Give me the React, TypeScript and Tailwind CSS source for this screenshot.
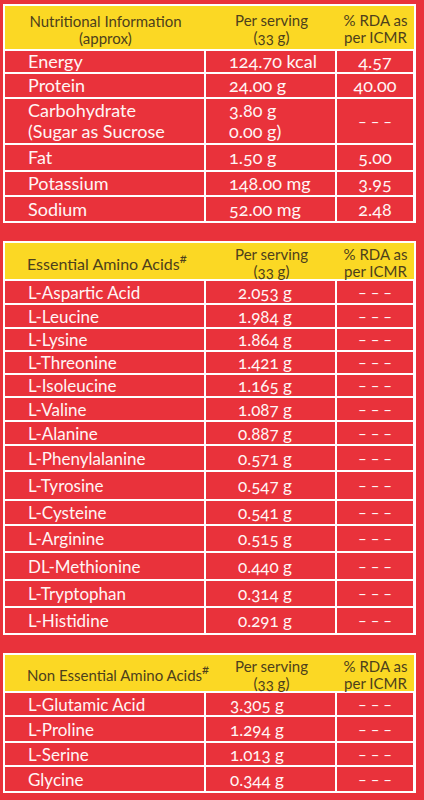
import React from "react";

type Row = { name: string[]; value: string[]; rda: string; h: string };

const DASH = "– – –";

const nutrition: Row[] = [
  { name: ["Energy"], value: ["124.70 kcal"], rda: "4.57", h: "h-[21px]" },
  { name: ["Protein"], value: ["24.00 g"], rda: "40.00", h: "h-[23px]" },
  {
    name: ["Carbohydrate", "(Sugar as Sucrose"],
    value: ["3.80 g", "0.00 g)"],
    rda: DASH,
    h: "h-[44px]",
  },
  { name: ["Fat"], value: ["1.50 g"], rda: "5.00", h: "h-[25px]" },
  { name: ["Potassium"], value: ["148.00 mg"], rda: "3.95", h: "h-[23px]" },
  { name: ["Sodium"], value: ["52.00 mg"], rda: "2.48", h: "h-[24px]" },
];

const essential: Row[] = [
  { name: ["L-Aspartic Acid"], value: ["2.053 g"], rda: DASH, h: "h-[22px]" },
  { name: ["L-Leucine"], value: ["1.984 g"], rda: DASH, h: "h-[22px]" },
  { name: ["L-Lysine"], value: ["1.864 g"], rda: DASH, h: "h-[21px]" },
  { name: ["L-Threonine"], value: ["1.421 g"], rda: DASH, h: "h-[21px]" },
  { name: ["L-Isoleucine"], value: ["1.165 g"], rda: DASH, h: "h-[21px]" },
  { name: ["L-Valine"], value: ["1.087 g"], rda: DASH, h: "h-[22px]" },
  { name: ["L-Alanine"], value: ["0.887 g"], rda: DASH, h: "h-[22px]" },
  { name: ["L-Phenylalanine"], value: ["0.571 g"], rda: DASH, h: "h-[24px]" },
  { name: ["L-Tyrosine"], value: ["0.547 g"], rda: DASH, h: "h-[27px]" },
  { name: ["L-Cysteine"], value: ["0.541 g"], rda: DASH, h: "h-[23px]" },
  { name: ["L-Arginine"], value: ["0.515 g"], rda: DASH, h: "h-[25px]" },
  { name: ["DL-Methionine"], value: ["0.440 g"], rda: DASH, h: "h-[26px]" },
  { name: ["L-Tryptophan"], value: ["0.314 g"], rda: DASH, h: "h-[25px]" },
  { name: ["L-Histidine"], value: ["0.291 g"], rda: DASH, h: "h-[25px]" },
];

const nonEssential: Row[] = [
  { name: ["L-Glutamic Acid"], value: ["3.305 g"], rda: DASH, h: "h-[22px]" },
  { name: ["L-Proline"], value: ["1.294 g"], rda: DASH, h: "h-[24px]" },
  { name: ["L-Serine"], value: ["1.013 g"], rda: DASH, h: "h-[22px]" },
  { name: ["Glycine"], value: ["0.344 g"], rda: DASH, h: "h-[24px]" },
];

function SideHeaders() {
  return (
    <>
      <div className="flex w-[131px] flex-col items-center pt-[3px] text-center">
        <span>Per serving</span>
        <span>(33 g)</span>
      </div>
      <div className="flex w-[77px] flex-col items-center pt-[3px] text-center">
        <span>% RDA as</span>
        <span>per ICMR</span>
      </div>
    </>
  );
}

function Table({
  head,
  rows,
  headH,
  big,
  valuePad,
}: {
  head: React.ReactNode;
  rows: Row[];
  headH: string;
  big?: boolean;
  valuePad: string;
}) {
  return (
    <div className="w-[413px] border-2 border-white">
      <div
        className={`flex items-center bg-[#fbd824] text-[15px] leading-[17px] text-[#4d401c] ${headH}`}
      >
        {head}
        <SideHeaders />
      </div>
      <div
        className={`flex flex-col gap-[2px] bg-white pt-[2px] text-[#fff5f5] ${
          big ? "text-[18px] leading-[21px]" : "text-[17px] leading-[19px]"
        }`}
      >
        {rows.map((r) => (
          <div key={r.name[0]} className={`flex gap-[2px] ${r.h}`}>
            <div className="flex w-[199px] flex-col justify-center bg-[#e9323b] pl-[23px]">
              {r.name.map((n) => (
                <span key={n}>{n}</span>
              ))}
            </div>
            <div
              className={`flex w-[129px] flex-col justify-center bg-[#e9323b] ${valuePad}`}
            >
              {r.value.map((v) => (
                <span key={v}>{v}</span>
              ))}
            </div>
            <div className="flex w-[76px] items-center justify-center bg-[#e9323b]">
              <span className={r.rda === DASH ? "text-[15px] whitespace-pre" : ""}>
                {r.rda}
              </span>
            </div>
          </div>
        ))}
      </div>
    </div>
  );
}

export default function App() {
  return (
    <div className="h-[800px] w-full overflow-hidden bg-[#e9323b] pl-[3px] pt-[4px] font-['Lato',sans-serif] [font-variant-numeric:oldstyle-nums]">
      <div className="flex flex-col gap-[18px]">
        <Table
          headH="h-[43px]"
          big
          valuePad="pl-[23px]"
          rows={nutrition}
          head={
            <div className="flex w-[201px] flex-col items-center pt-1 text-center">
              <span>Nutritional Information</span>
              <span>(approx)</span>
            </div>
          }
        />
        <Table
          headH="h-[36px]"
          valuePad="pl-[32px]"
          rows={essential}
          head={
            <div className="w-[201px] pl-[22px] pt-1 text-[16px]">
              Essential Amino Acids
              <sup className="text-[13px]">#</sup>
            </div>
          }
        />
        <Table
          headH="h-[36px]"
          valuePad="pl-[24px]"
          rows={nonEssential}
          head={
            <div className="w-[201px] whitespace-nowrap pl-[22px] pt-1 text-[15px]">
              Non Essential Amino Acids
              <sup className="text-[13px]">#</sup>
            </div>
          }
        />
      </div>
    </div>
  );
}
